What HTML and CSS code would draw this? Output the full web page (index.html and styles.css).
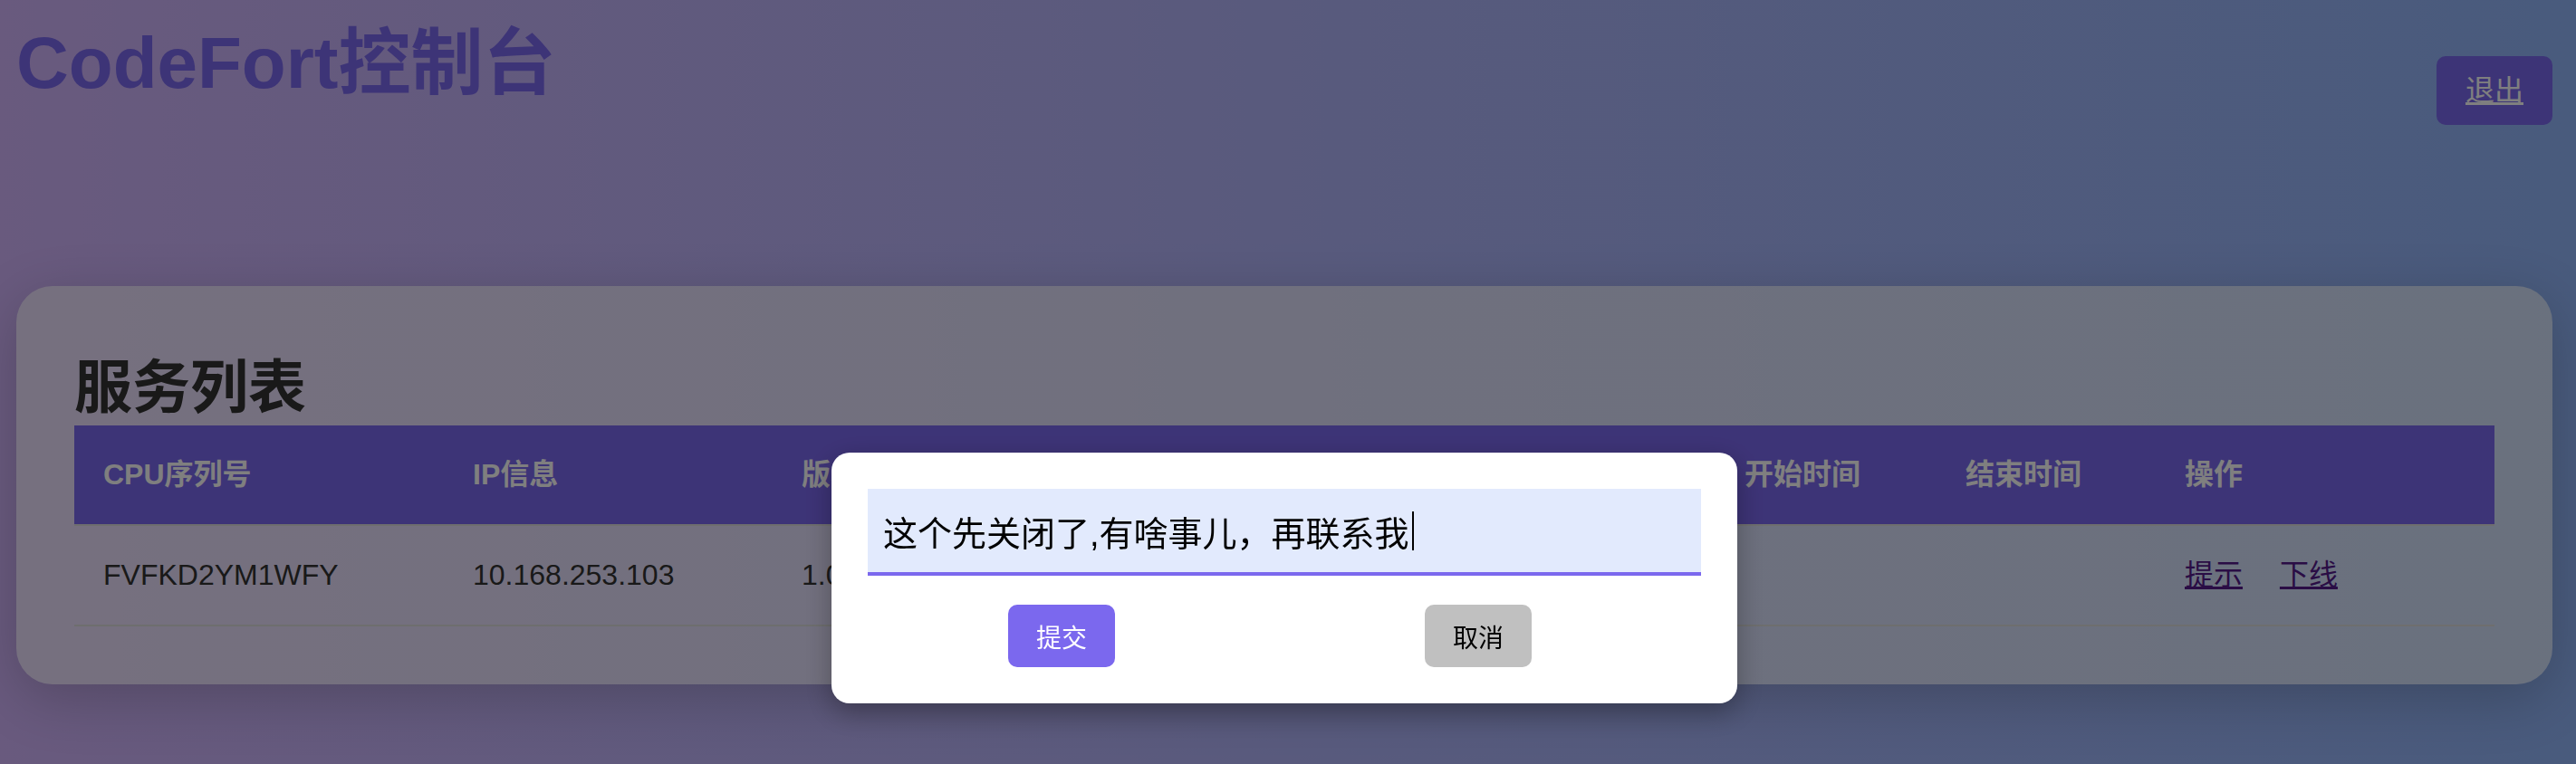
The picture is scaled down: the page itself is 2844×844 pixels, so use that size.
FILE: index.html
```html
<!DOCTYPE html>
<html lang="zh-CN">
<head>
<meta charset="utf-8">
<title>CodeFort控制台</title>
<link rel="stylesheet" href="styles.css">
</head>
<body>
<div class="page">
  <header class="topbar">
    <h1 class="brand">CodeFort控制台</h1>
    <a class="logout" href="#">退出</a>
  </header>
  <main class="card">
    <h2 class="card-title">服务列表</h2>
    <table class="services">
      <colgroup>
        <col class="c-cpu"><col class="c-ip"><col class="c-ver"><col class="c-state"><col class="c-note"><col class="c-start"><col class="c-end"><col class="c-op">
      </colgroup>
      <thead>
        <tr><th>CPU序列号</th><th>IP信息</th><th>版本</th><th>状态</th><th>备注</th><th>开始时间</th><th>结束时间</th><th>操作</th></tr>
      </thead>
      <tbody>
        <tr><td>FVFKD2YM1WFY</td><td>10.168.253.103</td><td>1.0.3</td><td>在线</td><td></td><td></td><td></td><td class="actions"><a href="#">提示</a> <a href="#">下线</a></td></tr>
      </tbody>
    </table>
  </main>
</div>
<div class="overlay"></div>
<div class="modal">
  <div class="field" role="textbox">这个先关闭了,有啥事儿，再联系我<span class="caret"></span></div>
  <div class="modal-actions">
    <button class="btn btn-primary" type="button">提交</button>
    <button class="btn btn-secondary" type="button">取消</button>
  </div>
</div>
</body>
</html>
```

FILE: styles.css
```css
* { box-sizing: border-box; }
html, body { margin: 0; height: 100%; }
body {
  font-family: "Liberation Sans", "Noto Sans CJK SC", sans-serif;
  color: #333;
  background: linear-gradient(to right, #d2b4fc, #92b6fa);
  min-height: 100vh;
}
.page { width: 2800px; margin-left: 18px; padding-top: 24px; }
.topbar { display: flex; justify-content: space-between; align-items: flex-start; }
.brand {
  margin: 0;
  font-size: 80px;
  line-height: 92px;
  font-weight: 700;
  color: #7b68ee;
}
.logout {
  margin-top: 38px;
  display: inline-block;
  padding: 16px 32px;
  font-size: 32px;
  line-height: 44px;
  color: #fff;
  background: #7b68ee;
  border-radius: 10px;
  text-decoration: underline;
}
.card {
  display: block;
  margin-top: 178px;
  padding: 64px;
  background: rgba(255, 255, 255, 0.6);
  border-radius: 40px;
  box-shadow: 0 16px 64px rgba(0, 0, 0, 0.2);
}
.card-title {
  margin: 11px 0 5px;
  font-size: 64px;
  line-height: 74px;
  font-weight: 700;
}
.services {
  width: 100%;
  table-layout: fixed;
  border-collapse: separate;
  border-spacing: 0;
  font-size: 32px;
}
.c-cpu { width: 408px; }
.c-ip { width: 363px; }
.c-ver, .c-state, .c-note { width: 347px; }
.c-start { width: 244px; }
.c-end { width: 242px; }
.c-op { width: 374px; }
.services th, .services td {
  padding: 32px;
  line-height: 45px;
  text-align: left;
  white-space: nowrap;
  overflow: hidden;
  border-bottom: 2px solid #ddd;
}
.services th { background: #7b68ee; color: #fff; font-weight: 700; }
.actions a { color: #551a8b; text-decoration: underline; margin-right: 32px; }
.actions a:last-child { margin-right: 0; }
.overlay { position: fixed; inset: 0; background: rgba(0, 0, 0, 0.5); z-index: 10; }
.modal {
  position: fixed;
  top: 500px;
  left: 918px;
  width: 1000px;
  padding: 40px;
  background: #fff;
  border-radius: 20px;
  box-shadow: 0 10px 30px rgba(0, 0, 0, 0.3);
  z-index: 11;
}
.field {
  height: 96px;
  display: flex;
  align-items: center;
  padding-left: 17px;
  background: #e2eafd;
  border-bottom: 4px solid #7b68ee;
  font-size: 38px;
  color: #000;
  white-space: nowrap;
}
.caret { width: 2px; height: 43px; background: #000; margin-left: 3px; }
.modal-actions { display: flex; justify-content: space-around; margin-top: 32px; }
.btn {
  font-family: inherit;
  font-size: 28px;
  height: 69px;
  padding: 0 31px;
  border: none;
  border-radius: 10px;
  margin-right: 32px;
}
.btn-primary { background: #7b68ee; color: #fff; }
.btn-secondary { background: #c0c0c0; color: #000; }
```
